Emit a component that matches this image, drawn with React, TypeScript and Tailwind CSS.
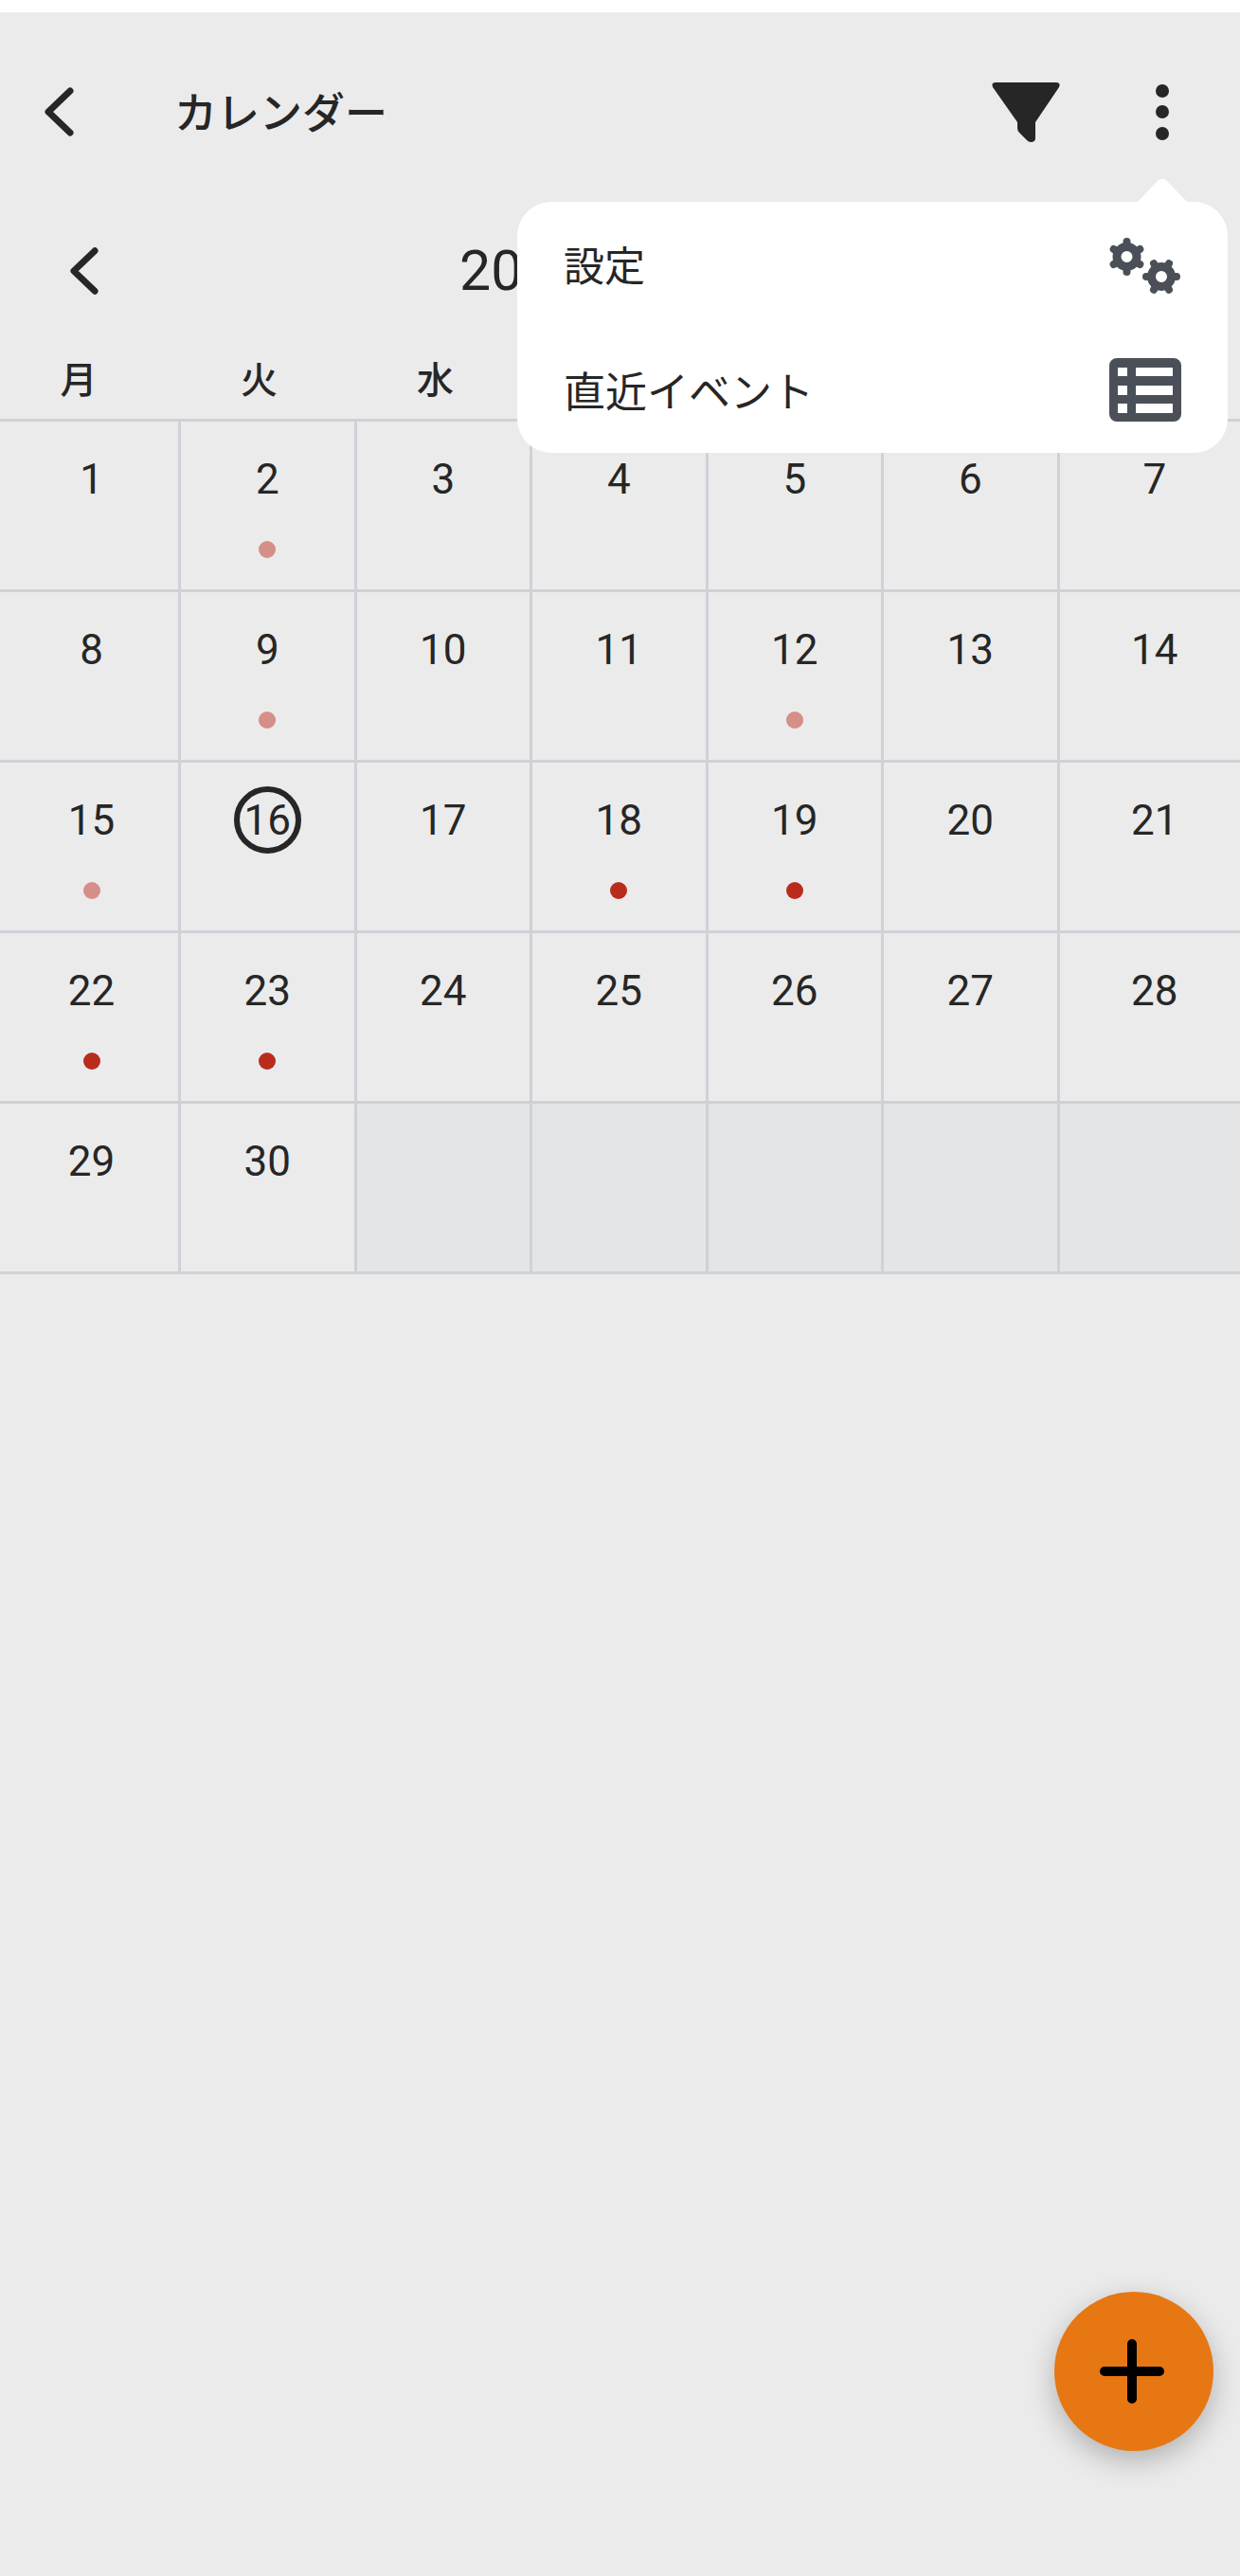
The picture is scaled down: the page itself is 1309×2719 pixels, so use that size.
import React from 'react';

const jp = 'font-["Noto_Sans_CJK_JP","Noto_Sans",sans-serif]';
const num = 'font-["Roboto","Noto_Sans_CJK_JP",sans-serif]';

const strong = [18, 19, 22, 23];
const faded = [2, 9, 12, 15];
const cells: (number | null)[] = [...Array.from({ length: 30 }, (_, i) => i + 1), null, null, null, null, null];

const Chevron: React.FC<{ className: string }> = ({ className }) => (
  <svg className={className} viewBox="0 0 32 52" fill="none" stroke="#262626" strokeWidth={7} strokeLinecap="round" strokeLinejoin="round">
    <path d="M28 4 L5 26 L28 48" />
  </svg>
);

const Gear: React.FC<{ cx: number; cy: number; start: number }> = ({ cx, cy, start }) => (
  <g stroke="#4b5058">
    <circle cx={cx} cy={cy} r={10.5} fill="none" strokeWidth={9} />
    {[0, 60, 120, 180, 240, 300].map((a) => {
      const r = ((a + start) * Math.PI) / 180;
      return (
        <line
          key={a}
          x1={cx + Math.cos(r) * 11}
          y1={cy + Math.sin(r) * 11}
          x2={cx + Math.cos(r) * 16}
          y2={cy + Math.sin(r) * 16}
          strokeWidth={8}
          strokeLinecap="round"
        />
      );
    })}
  </g>
);

const App: React.FC = () => {
  return (
    <div className="relative w-[1309px] h-[2719px] overflow-hidden bg-white pt-[13px]">
      <div className="h-full bg-[#ebebeb]">
        {/* App bar */}
        <div className="flex h-[210px] items-center pl-[46px] pr-[75px]">
          <Chevron className="w-[32px] h-[52px]" />
          <span className={`mb-[3px] ml-[106px] text-[45px] font-medium text-[#262626] ${jp}`}>カレンダー</span>
          <div className="ml-auto flex items-center gap-[101px]">
            <svg className="w-[72px] h-[63px] fill-[#262626]" viewBox="0 0 72 63">
              <path d="M4 0 H68 Q73 0 71 5 L46 42 V59 Q46 63 41 63 Q39 63 37 61 L29 53 Q27 51 27 48 V42 L1 5 Q-1 0 4 0 Z" />
            </svg>
            <div className="flex flex-col gap-[8.5px]">
              <span className="block w-[14px] h-[14px] rounded-full bg-[#262626]" />
              <span className="block w-[14px] h-[14px] rounded-full bg-[#262626]" />
              <span className="block w-[14px] h-[14px] rounded-full bg-[#262626]" />
            </div>
          </div>
        </div>

        {/* Month switcher */}
        <div className="flex h-[126px] items-center pl-[73px] pr-[75px]">
          <Chevron className="w-[31px] h-[52px]" />
          <span className={`ml-[381px] text-[59px] text-[#262626] ${num}`}>2024年4月</span>
        </div>

        {/* Weekdays */}
        <div className={`grid h-[93px] grid-cols-[166px_215px_157px_repeat(4,1fr)] items-center pt-[5px] text-center text-[39px] font-medium text-[#262626] ${jp}`}>
          {['月', '火', '水', '木', '金', '土', '日'].map((d) => (
            <span key={d}>{d}</span>
          ))}
        </div>

        {/* Month grid */}
        <div className="grid grid-cols-[191px_repeat(5,185.5px)_1fr] border-t-[3px] border-[#cfd1d8]">
          {cells.map((d, i) => (
            <div
              key={i}
              className={`relative flex h-[180px] flex-col items-center border-b-[3px] border-[#cfd1d8] ${i % 7 === 6 ? 'pl-[10px]' : 'border-r-[3px]'} ${i % 7 === 0 ? 'pl-[5px]' : ''} ${d === null ? 'bg-[#e4e5e7]' : ''}`}
            >
              {d !== null && (
                <span className={`mt-[25px] flex h-[71px] w-[71px] items-center justify-center rounded-full text-[44px] leading-none text-[#262626] ${d === 16 ? 'border-[6px] border-[#262626]' : ''} ${num}`}>
                  {d}
                </span>
              )}
              {d !== null && strong.includes(d) && <span className="mt-[30px] block h-[18px] w-[18px] rounded-full bg-[#b92c1c]" />}
              {d !== null && faded.includes(d) && <span className="mt-[30px] block h-[18px] w-[18px] rounded-full bg-[#d58e88]" />}
            </div>
          ))}
        </div>
      </div>

      {/* Overflow menu */}
      <div className={`absolute left-[546px] top-[213px] h-[265px] w-[750px] rounded-[36px] bg-white text-[#262626] ${jp}`}>
        <svg className="absolute left-[654px] top-[-25px] w-[54px] h-[26px] fill-white" viewBox="0 0 54 26">
          <path d="M0 26 L22 3 Q27 -2 32 3 L54 26 Z" />
        </svg>
        <div className="flex h-[136px] items-center justify-between pl-[49px] pr-[49px]">
          <span className="mb-[6px] text-[43px] font-normal">設定</span>
          <svg className="w-[76px] h-[62px]" viewBox="0 0 76 62">
            <Gear cx={18.5} cy={21} start={30} />
            <Gear cx={55} cy={42} start={0} />
          </svg>
        </div>
        <div className="flex h-[129px] items-center justify-between pl-[49px] pr-[49px]">
          <span className="mb-[6px] text-[44px] font-normal">直近イベント</span>
          <svg className="mb-[4px] w-[76px] h-[67px] fill-[#4b5058]" viewBox="0 0 76 67" fillRule="evenodd">
            <path d="M8 0 H68 A8 8 0 0 1 76 8 V59 A8 8 0 0 1 68 67 H8 A8 8 0 0 1 0 59 V8 A8 8 0 0 1 8 0 Z M9 10 V19 H19 V10 Z M28 10 V19 H67 V10 Z M9 29 V39 H19 V29 Z M28 29 V39 H67 V29 Z M9 48 V58 H19 V48 Z M28 48 V58 H67 V48 Z" />
          </svg>
        </div>
      </div>

      {/* Add button */}
      <div className="absolute left-[1113px] top-[2419px] flex h-[168px] w-[168px] items-center justify-center rounded-full bg-[#e67713] shadow-[0_10px_30px_rgba(0,0,0,0.25)]">
        <svg className="ml-[-4px] w-[68px] h-[68px]" viewBox="0 0 68 68" stroke="#000" strokeWidth={10} strokeLinecap="round">
          <path d="M34 5 V63 M5 34 H63" />
        </svg>
      </div>
    </div>
  );
};

export default App;
